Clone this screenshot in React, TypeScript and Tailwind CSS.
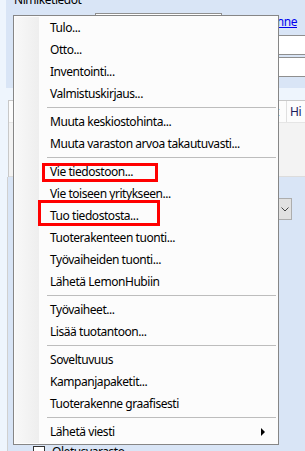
import React from "react";

type Entry = { label: string; sub?: boolean } | "sep";

const entries: Entry[] = [
  { label: "Tulo..." },
  { label: "Otto..." },
  { label: "Inventointi..." },
  { label: "Valmistuskirjaus..." },
  "sep",
  { label: "Muuta keskiostohinta..." },
  { label: "Muuta varaston arvoa takautuvasti..." },
  "sep",
  { label: "Vie tiedostoon..." },
  { label: "Vie toiseen yritykseen..." },
  { label: "Tuo tiedostosta..." },
  { label: "Tuoterakenteen tuonti..." },
  { label: "Työvaiheiden tuonti..." },
  { label: "Lähetä LemonHubiin" },
  "sep",
  { label: "Työvaiheet..." },
  { label: "Lisää tuotantoon..." },
  "sep",
  { label: "Soveltuvuus" },
  { label: "Kampanjapaketit..." },
  { label: "Tuoterakenne graafisesti" },
  "sep",
  { label: "Lähetä viesti", sub: true },
];

const font = { fontFamily: '"Segoe UI", "Noto Sans", "Open Sans", sans-serif' };

export default function App() {
  return (
    <div
      className="relative w-[305px] h-[451px] overflow-hidden bg-[#eef5fd] text-[12px] tracking-[-0.45px] text-black"
      style={font}
    >
      {/* Background window */}
      <div className="flex flex-col h-full">
        {/* top panel */}
        <div className="ml-[6px] h-[88px] bg-[#d9e5f6] flex flex-col overflow-hidden">
          <div className="-mt-[9px] pl-[8px] h-[22px] leading-[18px]">Nimiketiedot</div>
          <div className="flex items-start">
            <div className="ml-[89px] w-[127px] h-[18px] border border-[#8f8f8f] bg-white" />
            <div className="ml-auto mr-[8px] text-[#0000ee] underline leading-[16px] mt-[1px] whitespace-nowrap">
              Muuta hinne
            </div>
          </div>
          <div className="mt-[4px] flex flex-col gap-[2px] items-end">
            <div className="w-[60px] h-[20px] border border-r-0 border-[#8f8f8f] bg-white" />
            <div className="w-[60px] h-[20px] border border-r-0 border-[#8f8f8f] bg-white" />
          </div>
        </div>
        <div className="h-[12px]" />
        {/* table */}
        <div className="ml-[8px] border-t border-l border-[#c8c8c8] bg-white">
          <div className="h-[22px] flex justify-end bg-[#fcfcfc] border-b border-[#e5e5e5]">
            <div className="w-[16px] border-r border-[#e0e0e0] text-[#1a1a5a] pl-[4px] pt-[2px]">t</div>
            <div className="w-[18px] pl-[3px] pt-[2px] text-[#1a1a5a]">Hi</div>
          </div>
          <div className="h-[54px] bg-[#f3f3f3] border-b border-[#dcdcdc]" />
        </div>
        <div className="ml-[7px] border-l border-[#d0d0d0] flex-1 bg-[#d9e5f6] flex flex-col">
          <div className="mt-[21px] self-end mr-[13px] w-[14px] h-[22px] border border-[#adadad] bg-[#e1e1e1] flex items-center justify-center">
            <svg width="8" height="5" viewBox="0 0 8 5">
              <path d="M0.5 0.5 L4 4 L7.5 0.5" fill="none" stroke="#444" strokeWidth="1" />
            </svg>
          </div>
          <div className="mt-auto mb-[-10px] ml-[25px] flex items-center gap-[7px]">
            <div className="w-[12px] h-[12px] border border-[#333] bg-white" />
            <div>Oletusvarasto</div>
          </div>
        </div>
      </div>

      {/* Context menu */}
      <div className="absolute left-[13px] top-[15px] w-[266px] border border-[#868686] bg-[#fcfcfc] p-[1px] flex">
        <div className="w-[24px] shrink-0 -mr-[24px] bg-gradient-to-r from-[#f8f8f8] to-[#eeeeee]" />
        <div className="flex flex-col w-full">
          {entries.map((e, i) =>
            e === "sep" ? (
              <div key={i} className="h-[6px] pl-[32px] pr-[1px] pt-[2px]">
                <div className="h-[1px] bg-[#bdbdbd]" />
              </div>
            ) : (
              <div key={i} className="h-[22px] flex items-center pl-[35px] pr-[10px] leading-none">
                <span className="flex-1">{e.label}</span>
                {e.sub && (
                  <svg width="4" height="8" viewBox="0 0 4 8" className="mr-[2px]">
                    <path d="M0 0 L4 4 L0 8 Z" fill="#000" />
                  </svg>
                )}
              </div>
            )
          )}
        </div>
      </div>

      {/* Red highlight boxes */}
      <div className="absolute left-[42px] top-[163px] w-[116px] h-[19px] border-[3px] border-[#ff0000]" />
      <div className="absolute left-[38px] top-[200px] w-[122px] h-[26px] border-[3px] border-[#ff0000]" />
    </div>
  );
}
